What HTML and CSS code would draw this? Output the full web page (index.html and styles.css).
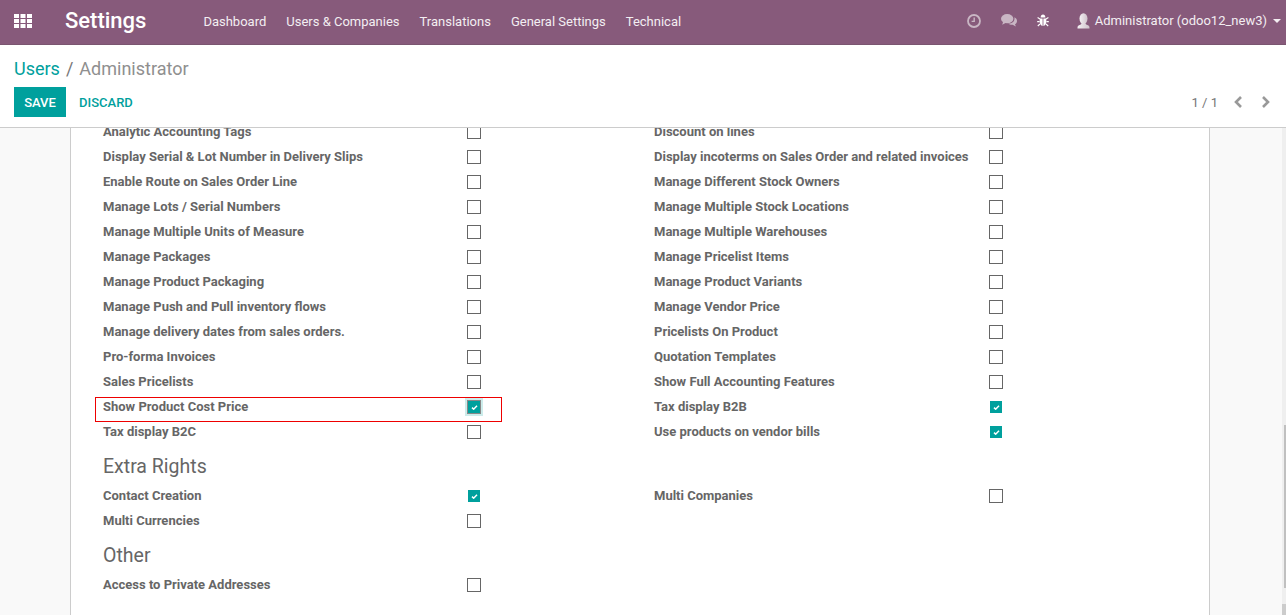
FILE: index.html
```html
<!DOCTYPE html>
<html lang="en">
<head>
<meta charset="utf-8">
<title>Settings</title>
<link rel="stylesheet" href="styles.css">
</head>
<body>
<header class="navbar">
  <svg class="apps" width="18" height="14" viewBox="0 0 18 14" fill="#fff"><rect x="0" y="0" width="5" height="4"/><rect x="6.5" y="0" width="5" height="4"/><rect x="13" y="0" width="5" height="4"/><rect x="0" y="5" width="5" height="4"/><rect x="6.5" y="5" width="5" height="4"/><rect x="13" y="5" width="5" height="4"/><rect x="0" y="10" width="5" height="4"/><rect x="6.5" y="10" width="5" height="4"/><rect x="13" y="10" width="5" height="4"/></svg>
  <span class="brand">Settings</span>
  <nav class="menu">
    <a>Dashboard</a><a>Users &amp; Companies</a><a>Translations</a><a>General Settings</a><a>Technical</a>
  </nav>
  <div class="systray">
    <svg class="ico-clock" width="14" height="14" viewBox="0 0 14 14" fill="none" stroke="#c9b6c4"><circle cx="7" cy="7" r="6" stroke-width="1.8"/><path d="M7.2 3.4V7.4H4.6" stroke-width="1.4"/></svg>
    <svg class="ico-chat" width="16" height="13" viewBox="0 0 16 13" fill="#c9b6c4"><ellipse cx="6.2" cy="4.7" rx="6.2" ry="4.6"/><path d="M2.2 7.5 1.2 10.8 5.4 8.6Z"/><path d="M13.4 3.2C15 4 16 5.3 16 6.9c0 1.4-.8 2.6-2 3.3l.9 2.4-3.3-1.8c-1.7.1-3.4-.3-4.4-1.2 3.6.1 7-2 6.2-6.4Z"/></svg>
    <svg class="ico-bug" width="12" height="13" viewBox="0 0 12 13"><g stroke="#fff" stroke-width="1.1" fill="none"><path d="M3 5 .6 3.6M9 5l2.4-1.4M2.6 7.6H.2M9.4 7.6h2.4M3 10 .8 12M9 10l2.2 2"/></g><path d="M3.6 3.6C3.6 1.8 4.7.6 6 .6s2.4 1.2 2.4 3Z" fill="#fff"/><path d="M2.7 4.4h2.9V12C3.9 11.8 2.7 10 2.7 7.6ZM9.3 4.4H6.4V12c1.7-.2 2.9-2 2.9-4.4Z" fill="#fff"/></svg>
    <span class="user">
      <svg class="ico-user" width="13" height="16" viewBox="0 0 13 16"><defs><linearGradient id="u" x1="0" y1="0" x2="1" y2="0"><stop offset="0" stop-color="#f4f0f3"/><stop offset="1" stop-color="#cfc2cb"/></linearGradient></defs><ellipse cx="6.5" cy="5.6" rx="4" ry="5.4" fill="url(#u)"/><path d="M4.6 10c-.1 1.200-.6 1.600-2.600 2.200C.8 12.600.5 13.500.5 15.500h12c0-2-.3-2.900-1.500-3.300-2-.6-2.500-1-2.600-2.200Z" fill="url(#u)"/></svg>
      <span>Administrator (odoo12_new3)</span>
      <i class="caret"></i>
    </span>
  </div>
</header>

<section class="panel">
  <div class="crumbs"><a>Users</a><span class="sep">/</span><span class="cur">Administrator</span></div>
  <div class="actions">
    <div class="buttons"><button class="btn-save">SAVE</button><button class="btn-discard">DISCARD</button></div>
    <div class="pager">
      <span class="count">1 / 1</span>
      <svg width="10" height="12" viewBox="0 0 10 12" fill="none" stroke="#999" stroke-width="2.6"><path d="M8 1 3 6l5 5"/></svg>
      <svg width="10" height="12" viewBox="0 0 10 12" fill="none" stroke="#999" stroke-width="2.6"><path d="M2 1l5 5-5 5"/></svg>
    </div>
  </div>
</section>

<div class="main">
  <main class="scroll">
    <article class="sheet">
      <div class="fields">
        <div class="field"><label>Analytic Accounting Tags</label><span class="check"></span></div>
        <div class="field"><label>Discount on lines</label><span class="check"></span></div>
        <div class="field"><label>Display Serial &amp; Lot Number in Delivery Slips</label><span class="check"></span></div>
        <div class="field"><label>Display incoterms on Sales Order and related invoices</label><span class="check"></span></div>
        <div class="field"><label>Enable Route on Sales Order Line</label><span class="check"></span></div>
        <div class="field"><label>Manage Different Stock Owners</label><span class="check"></span></div>
        <div class="field"><label>Manage Lots / Serial Numbers</label><span class="check"></span></div>
        <div class="field"><label>Manage Multiple Stock Locations</label><span class="check"></span></div>
        <div class="field"><label>Manage Multiple Units of Measure</label><span class="check"></span></div>
        <div class="field"><label>Manage Multiple Warehouses</label><span class="check"></span></div>
        <div class="field"><label>Manage Packages</label><span class="check"></span></div>
        <div class="field"><label>Manage Pricelist Items</label><span class="check"></span></div>
        <div class="field"><label>Manage Product Packaging</label><span class="check"></span></div>
        <div class="field"><label>Manage Product Variants</label><span class="check"></span></div>
        <div class="field"><label>Manage Push and Pull inventory flows</label><span class="check"></span></div>
        <div class="field"><label>Manage Vendor Price</label><span class="check"></span></div>
        <div class="field"><label>Manage delivery dates from sales orders.</label><span class="check"></span></div>
        <div class="field"><label>Pricelists On Product</label><span class="check"></span></div>
        <div class="field"><label>Pro-forma Invoices</label><span class="check"></span></div>
        <div class="field"><label>Quotation Templates</label><span class="check"></span></div>
        <div class="field"><label>Sales Pricelists</label><span class="check"></span></div>
        <div class="field"><label>Show Full Accounting Features</label><span class="check"></span></div>
        <div class="field highlighted"><label>Show Product Cost Price</label><span class="check on focus"><svg width="7" height="5" viewBox="0 0 8 6" fill="none" stroke="#fff" stroke-width="1.8"><path d="M1 3.200 3 5 7 1"/></svg></span></div>
        <div class="field"><label>Tax display B2B</label><span class="check on"><svg width="7" height="5" viewBox="0 0 8 6" fill="none" stroke="#fff" stroke-width="1.8"><path d="M1 3.200 3 5 7 1"/></svg></span></div>
        <div class="field"><label>Tax display B2C</label><span class="check"></span></div>
        <div class="field"><label>Use products on vendor bills</label><span class="check on"><svg width="7" height="5" viewBox="0 0 8 6" fill="none" stroke="#fff" stroke-width="1.8"><path d="M1 3.200 3 5 7 1"/></svg></span></div>
      </div>
      <h3>Extra Rights</h3>
      <div class="fields">
        <div class="field"><label>Contact Creation</label><span class="check on"><svg width="7" height="5" viewBox="0 0 8 6" fill="none" stroke="#fff" stroke-width="1.8"><path d="M1 3.200 3 5 7 1"/></svg></span></div>
        <div class="field"><label>Multi Companies</label><span class="check"></span></div>
        <div class="field"><label>Multi Currencies</label><span class="check"></span></div>
      </div>
      <h3>Other</h3>
      <div class="fields">
        <div class="field"><label>Access to Private Addresses</label><span class="check"></span></div>
      </div>
    </article>
  </main>
  <div class="scrollbar"><div class="thumb"></div><div class="corner"></div></div>
</div>
</body>
</html>
```
FILE: styles.css
```css
*, *::after { box-sizing: border-box; }
html, body { height: 100%; }
body {
  margin: 0;
  height: 615px;
  overflow: hidden;
  display: flex;
  flex-direction: column;
  font-family: Roboto, "Noto Sans", sans-serif;
  font-size: 13px;
  color: #4c4c4c;
  background: #fff;
}

/* top bar */
.navbar {
  flex: none;
  height: 45px;
  display: flex;
  align-items: center;
  background: #875a7b;
  border-bottom: 1px solid #7a5570;
  color: #fff;
}
.apps { margin: 0 0 2px 14px; flex: none; }
.brand { margin: -2px 0 0 33px; font-size: 22px; font-weight: 500; width: 138.4px; line-height: 26px; color: #fff; }
.menu { display: flex; gap: 20px; color: #f3eef2; margin-top: -2px; }
.systray { margin-left: auto; display: flex; align-items: center; padding-right: 5px; margin-top: -3px; }
.ico-clock { margin-right: 20px; }
.ico-chat { margin-right: 20px; }
.ico-bug { margin-right: 28px; }
.user { display: flex; align-items: center; color: #f3eef2; }
.ico-user { margin-right: 5px; }
.caret {
  margin-left: 6px;
  margin-top: 1px;
  border-left: 4px solid transparent;
  border-right: 4px solid transparent;
  border-top: 4px solid #f3eef2;
}

/* control panel */
.panel {
  flex: none;
  height: 83px;
  padding: 13px 14px 0;
  border-bottom: 1px solid #ccc;
}
.crumbs { font-size: 18px; line-height: 22px; color: #8f8f8f; height: 29px; }
.crumbs a { color: #00a09d; }
.sep { margin: 0 6px; color: #777; }
.actions { display: flex; justify-content: space-between; align-items: center; }
.buttons { display: flex; align-items: center; }
button {
  font-family: inherit;
  font-size: 13px;
  font-weight: 500;
  height: 30px;
  border: 0;
  padding: 0;
}
.btn-save { width: 52px; background: #00a09d; color: #fff; }
.btn-discard { margin-left: 13px; background: none; color: #00a09d; }
.pager { display: flex; align-items: center; color: #777; padding-right: 1px; }
.pager svg + svg { margin-left: 18px; }
.count { margin-right: 15px; }

/* content */
.main { flex: 1; min-height: 0; display: flex; }
.scroll { flex: 1; min-width: 0; overflow: hidden; background: #f9f9f9; padding-left: 70px; }
.sheet {
  width: 1140px;
  margin-top: -8px;
  min-height: 600px;
  padding: 0 32px;
  background: #fff;
  border-left: 1px solid #ccc;
  border-right: 1px solid #ccc;
}
.fields { display: grid; grid-template-columns: 551px 1fr; }
.field { position: relative; height: 25px; display: flex; align-items: center; }
.field label { width: 364px; margin-top: -2px; font-weight: 700; color: #666; }
.field:nth-child(even) label { width: 335px; }
.highlighted::after {
  content: "";
  position: absolute;
  left: -8px;
  top: 2px;
  width: 407px;
  height: 25px;
  border: 1px solid #e00;
}
.sheet h3 {
  margin: 0;
  height: 39px;
  padding-top: 10px;
  font-size: 19.5px;
  line-height: 23px;
  font-weight: 400;
  color: #666;
}

/* checkbox */
.check {
  flex: none;
  width: 14px;
  height: 14px;
  display: flex;
  align-items: center;
  justify-content: center;
  border: 1px solid #666;
  margin-top: -1px;
  background: #fff;
}
.check.on { border-color: transparent; background: #00a09d; background-clip: padding-box; }
.check.focus { border-color: #888; box-shadow: 0 0 0 2px rgba(0, 160, 157, .2); }

/* scrollbar */
.scrollbar {
  flex: none;
  width: 4px;
  display: flex;
  flex-direction: column;
  align-items: flex-end;
  padding-top: 297px;
  background: #efefef;
}
.thumb { width: 2px; height: 163px; background: #c0c0c0; }
.corner { margin-top: auto; width: 4px; height: 11px; background: #ccc; }
```
